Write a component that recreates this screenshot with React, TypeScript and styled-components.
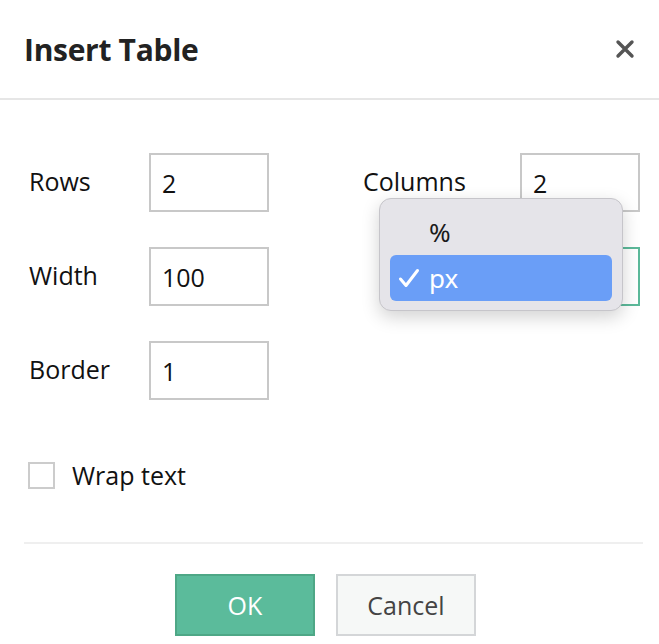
import styled, { createGlobalStyle } from 'styled-components';

const GlobalStyle = createGlobalStyle`
  html, body {
    margin: 0;
    padding: 0;
    background: #ffffff;
  }
  body {
    font-family: "Open Sans", "Noto Sans", sans-serif;
    color: #111;
  }
`;

const Dialog = styled.div`
  width: 659px;
  height: 644px;
  display: flex;
  flex-direction: column;
  background: #fff;
  overflow: hidden;
`;

const Header = styled.div`
  height: 100px;
  display: flex;
  align-items: center;
  justify-content: space-between;
  padding: 0 22px 0 24px;
  border-bottom: 2px solid #e6e6e6;
  box-sizing: border-box;
`;

const Title = styled.h1`
  margin: 0;
  font-size: 30px;
  font-weight: 700;
  color: #222;
  letter-spacing: -0.3px;
`;

const CloseButton = styled.button`
  border: 0;
  background: none;
  padding: 0;
  width: 24px;
  height: 24px;
  display: flex;
  align-items: center;
  justify-content: center;
  cursor: pointer;
`;

const Body = styled.div`
  position: relative;
  padding: 53px 0 0 29px;
  display: flex;
  flex-direction: column;
`;

const Grid = styled.div`
  display: grid;
  grid-template-columns: 120px 120px 94px 157px 120px;
  row-gap: 35px;
  align-items: center;
`;

const Label = styled.label`
  font-size: 25px;
  color: #111;
  margin-top: -4px;
`;

const Field = styled.div<{ $focus?: boolean }>`
  width: 120px;
  height: 59px;
  box-sizing: border-box;
  border: 2px solid ${(p) => (p.$focus ? '#5cb99a' : '#c8c8c8')};
  padding: 11px 0 0 11px;
  font-size: 25px;
  color: #111;
  background: #fff;
`;

const CheckRow = styled.div`
  display: flex;
  align-items: center;
  gap: 17px;
  margin: 58px 0 0 -1px;
  font-size: 25px;
`;

const Box = styled.span`
  width: 27px;
  height: 27px;
  box-sizing: border-box;
  border: 2px solid #cccccc;
  background: #fff;
`;

const Divider = styled.div`
  margin: 50px 16px 0 24px;
  height: 2px;
  background: #efefef;
`;

const Footer = styled.div`
  display: flex;
  justify-content: center;
  gap: 21px;
  padding: 30px 0 0 12px;
  margin-left: -20px;
`;

const Button = styled.button<{ $primary?: boolean }>`
  width: 140px;
  height: 62px;
  box-sizing: border-box;
  font-family: "Open Sans", "Noto Sans", sans-serif;
  font-size: 25px;
  border: 2px solid ${(p) => (p.$primary ? '#4ea786' : '#d4d6d8')};
  background: ${(p) => (p.$primary ? '#5bbb9b' : '#f6f8f7')};
  color: ${(p) => (p.$primary ? '#ffffff' : '#444')};
  cursor: pointer;
`;

const Menu = styled.div`
  position: absolute;
  left: 379px;
  top: 98px;
  width: 244px;
  box-sizing: border-box;
  padding: 10px 10px 9px 10px;
  background: #e5e4e9;
  border: 1px solid #c6c5ca;
  border-radius: 12px;
  box-shadow: 0 6px 18px rgba(0, 0, 0, 0.18);
  display: flex;
  flex-direction: column;
  font-family: "Noto Sans", "Open Sans", sans-serif;
`;

const MenuItem = styled.div<{ $active?: boolean }>`
  height: 46px;
  display: flex;
  align-items: center;
  border-radius: 6px;
  padding-left: 8px;
  font-size: 26px;
  background: ${(p) => (p.$active ? '#6a9ef7' : 'transparent')};
  color: ${(p) => (p.$active ? '#ffffff' : '#1a1a1a')};
`;

const Tick = styled.span`
  width: 31px;
  display: flex;
  align-items: center;
`;

export default function App() {
  return (
    <Dialog>
      <GlobalStyle />
      <Header>
        <Title>Insert Table</Title>
        <CloseButton aria-label="close">
          <svg width="20" height="20" viewBox="0 0 20 20">
            <path d="M3 3 L17 17 M17 3 L3 17" stroke="#555" strokeWidth="3.4" strokeLinecap="round" />
          </svg>
        </CloseButton>
      </Header>
      <Body>
        <Grid>
          <Label>Rows</Label>
          <Field>2</Field>
          <span />
          <Label>Columns</Label>
          <Field>2</Field>

          <Label>Width</Label>
          <Field>100</Field>
          <span />
          <span />
          <Field $focus>px</Field>

          <Label>Border</Label>
          <Field>1</Field>
        </Grid>
        <CheckRow>
          <Box />
          <span>Wrap text</span>
        </CheckRow>
        <Menu>
          <MenuItem>
            <Tick />%
          </MenuItem>
          <MenuItem $active>
            <Tick>
              <svg width="22" height="20" viewBox="0 0 22 20">
                <path d="M2.5 11 L8 17.5 L19.5 2.5" fill="none" stroke="#fff" strokeWidth="3" strokeLinecap="round" strokeLinejoin="round" />
              </svg>
            </Tick>
            px
          </MenuItem>
        </Menu>
      </Body>
      <Divider />
      <Footer>
        <Button $primary>OK</Button>
        <Button>Cancel</Button>
      </Footer>
    </Dialog>
  );
}
